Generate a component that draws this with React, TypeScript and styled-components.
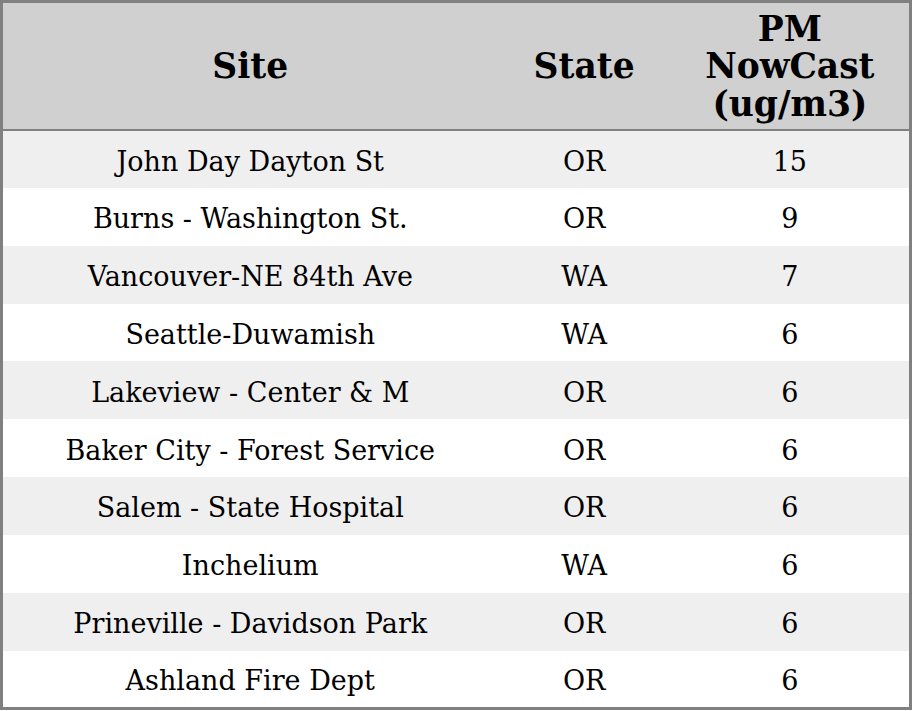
import React from 'react';
import styled, { createGlobalStyle } from 'styled-components';

const Global = createGlobalStyle`
  body {
    margin: 0;
    background: #fff;
    font-family: "DejaVu Serif", serif;
  }
`;

const Table = styled.table`
  width: 912px;
  border-collapse: collapse;
  border: 3px solid #808080;
  font-family: "DejaVu Serif", serif;
  color: #000;
  table-layout: fixed;
`;

const Head = styled.th<{ w: number }>`
  width: ${p => p.w}px;
  height: 124px;
  padding: 2px 0 0;
  background: #d0d0d0;
  border-bottom: 2.5px solid #808080;
  font-size: 34.5px;
  font-weight: bold;
  line-height: 37.5px;
  text-align: center;
`;

const Row = styled.tr<{ striped: boolean }>`
  height: 57.85px;
  background: ${p => (p.striped ? '#efefef' : '#fff')};
`;

const Cell = styled.td`
  padding: 4px 0 0;
  font-size: 27px;
  text-align: center;
`;

const rows = [
  { site: 'John Day Dayton St', state: 'OR', pm: 15 },
  { site: 'Burns - Washington St.', state: 'OR', pm: 9 },
  { site: 'Vancouver-NE 84th Ave', state: 'WA', pm: 7 },
  { site: 'Seattle-Duwamish', state: 'WA', pm: 6 },
  { site: 'Lakeview - Center & M', state: 'OR', pm: 6 },
  { site: 'Baker City - Forest Service', state: 'OR', pm: 6 },
  { site: 'Salem - State Hospital', state: 'OR', pm: 6 },
  { site: 'Inchelium', state: 'WA', pm: 6 },
  { site: 'Prineville - Davidson Park', state: 'OR', pm: 6 },
  { site: 'Ashland Fire Dept', state: 'OR', pm: 6 },
];

export default function App() {
  return <>
    <Global />
    <Table>
      <thead>
        <tr>
          <Head w={494}>Site</Head>
          <Head w={173}>State</Head>
          <Head w={238}>PM<br />NowCast<br />(ug/m3)</Head>
        </tr>
      </thead>
      <tbody>
        {rows.map((r, i) => <Row key={r.site} striped={i % 2 === 0}>
          <Cell>{r.site}</Cell>
          <Cell>{r.state}</Cell>
          <Cell>{r.pm}</Cell>
        </Row>)}
      </tbody>
    </Table>
  </>;
}
